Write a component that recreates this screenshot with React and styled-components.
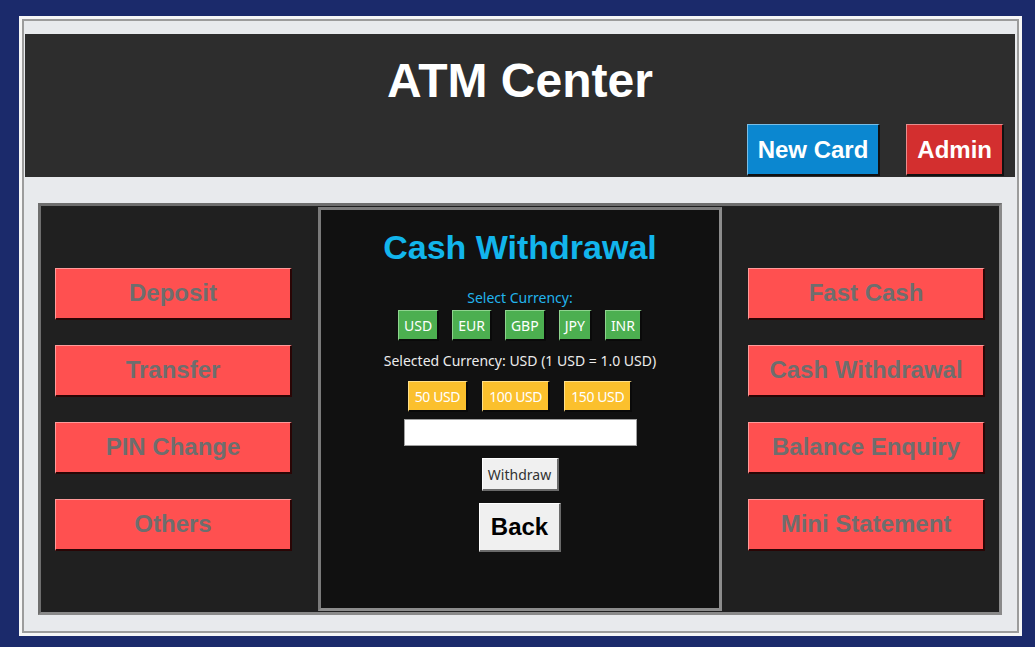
import React, { useState } from 'react';
import styled, { createGlobalStyle } from 'styled-components';

const GlobalStyle = createGlobalStyle`
  html, body {
    margin: 0;
    padding: 0;
    background: #1b2a6b;
  }
  body {
    font-family: 'Liberation Sans', Arial, sans-serif;
  }
`;

const currencies = ['USD', 'EUR', 'GBP', 'JPY', 'INR'];
const amounts = [50, 100, 150];
const leftMenu = ['Deposit', 'Transfer', 'PIN Change', 'Others'];
const rightMenu = ['Fast Cash', 'Cash Withdrawal', 'Balance Enquiry', 'Mini Statement'];

export default function App() {
  const [currency, setCurrency] = useState('USD');
  const [amount, setAmount] = useState('');

  return (
    <>
      <GlobalStyle />
      <Window>
        <Header>
          <Title>ATM Center</Title>
          <HeaderActions>
            <HeaderButton $bg="#0b87d0">New Card</HeaderButton>
            <HeaderButton $bg="#d32f2f">Admin</HeaderButton>
          </HeaderActions>
        </Header>

        <Panel>
          <MenuColumn $side="left">
            {leftMenu.map((label) => (
              <MenuButton key={label}>{label}</MenuButton>
            ))}
          </MenuColumn>

          <Screen>
            <ScreenTitle>Cash Withdrawal</ScreenTitle>
            <Label>Select Currency:</Label>
            <ChipRow $gap={13} $top={3}>
              {currencies.map((c) => (
                <Chip key={c} $color="green" onClick={() => setCurrency(c)}>
                  {c}
                </Chip>
              ))}
            </ChipRow>
            <Info>Selected Currency: {currency} (1 {currency} = 1.0 USD)</Info>
            <ChipRow $gap={14} $top={11}>
              {amounts.map((a) => (
                <Chip
                  key={a}
                  $color="yellow"
                  onClick={() => setAmount(String(a))}
                >
                  {a} {currency}
                </Chip>
              ))}
            </ChipRow>
            <AmountInput
              value={amount}
              onChange={(e) => setAmount(e.target.value)}
            />
            <WithdrawButton>Withdraw</WithdrawButton>
            <BackButton>Back</BackButton>
          </Screen>

          <MenuColumn $side="right">
            {rightMenu.map((label) => (
              <MenuButton key={label}>{label}</MenuButton>
            ))}
          </MenuColumn>
        </Panel>
      </Window>
    </>
  );
}

const Window = styled.div`
  box-sizing: border-box;
  margin: 16px 0 0 19px;
  width: 1003px;
  height: 620px;
  border: 3px solid #f6f6f6;
  box-shadow: inset 0 0 0 2px #9c9c9c;
  background: #e8eaed;
  padding: 15px 4px 18px 3px;
  display: flex;
  flex-direction: column;
`;

const Header = styled.header`
  box-sizing: border-box;
  height: 143px;
  background: #2d2d2d;
  padding-top: 19px;
  display: flex;
  flex-direction: column;
`;

const Title = styled.h1`
  margin: 0;
  text-align: center;
  color: #ffffff;
  font-size: 48px;
  font-weight: bold;
  line-height: 55px;
`;

const HeaderActions = styled.div`
  display: flex;
  justify-content: flex-end;
  gap: 26px;
  padding-right: 11px;
  margin-top: 16px;
`;

const HeaderButton = styled.button`
  box-sizing: border-box;
  height: 52px;
  padding: 0 10px;
  background: ${(p) => p.$bg};
  color: #ffffff;
  font-family: 'Liberation Sans', Arial, sans-serif;
  font-size: 24px;
  font-weight: bold;
  border-style: solid;
  border-color: rgba(255, 255, 255, 0.45) #111 #111 rgba(255, 255, 255, 0.45);
  border-width: 1px 2px 2px 1px;
`;

const Panel = styled.main`
  box-sizing: border-box;
  margin: 26px 13px 0;
  flex: 1;
  border: 3px solid;
  border-color: #6e6e6e #8a8a8a #8a8a8a #6e6e6e;
  background: #202020;
  display: grid;
  grid-template-columns: 1fr 404px 1fr;
  padding: 1px 0;
`;

const MenuColumn = styled.nav`
  display: flex;
  flex-direction: column;
  justify-content: center;
  gap: 25px;
  padding-left: ${(p) => (p.$side === 'left' ? '14px' : '26px')};
`;

const MenuButton = styled.button`
  box-sizing: border-box;
  width: 237px;
  height: 52px;
  background: #ff5050;
  color: #6e6e6e;
  font-family: 'Liberation Sans', Arial, sans-serif;
  font-size: 24px;
  font-weight: bold;
  border-style: solid;
  border-width: 1px 2px 2px 1px;
  border-color: #ff9a9a #2a0505 #2a0505 #ff9a9a;
  padding: 0;
`;

const Screen = styled.section`
  box-sizing: border-box;
  border: 3px solid;
  border-color: #7a7a7a #8c8c8c #8c8c8c #7a7a7a;
  background: #111111;
  display: flex;
  flex-direction: column;
  align-items: center;
  padding-top: 18px;
`;

const ScreenTitle = styled.h2`
  margin: 0;
  color: #12b5ec;
  font-size: 34px;
  font-weight: bold;
  line-height: 39px;
`;

const Label = styled.div`
  margin-top: 21px;
  color: #22b4ec;
  font-family: 'Noto Sans', sans-serif;
  font-size: 14px;
  line-height: 19px;
`;

const Info = styled.div`
  margin-top: 10px;
  color: #ececec;
  font-family: 'Noto Sans', sans-serif;
  font-size: 14px;
  line-height: 19px;
`;

const ChipRow = styled.div`
  display: flex;
  gap: ${(p) => p.$gap}px;
  margin-top: ${(p) => p.$top}px;
`;

const chipColors = {
  green: { bg: '#4caf50', light: '#8fd48f', pad: 5 },
  yellow: { bg: '#fbc02d', light: '#ffe08a', pad: 6 }
};

const Chip = styled.button`
  box-sizing: border-box;
  height: 31px;
  padding: 0 ${(p) => chipColors[p.$color].pad}px;
  background: ${(p) => chipColors[p.$color].bg};
  color: #ffffff;
  font-family: 'Noto Sans', sans-serif;
  font-size: 14px;
  letter-spacing: ${(p) => (p.$color === 'yellow' ? '-0.4px' : '0')};
  border-style: solid;
  border-width: 1px 2px 2px 1px;
  border-color: ${(p) => chipColors[p.$color].light} #0a0a0a #0a0a0a
    ${(p) => chipColors[p.$color].light};
`;

const AmountInput = styled.input`
  box-sizing: border-box;
  margin-top: 7px;
  width: 233px;
  height: 27px;
  border: 1px solid #a0a0a0;
  background: #ffffff;
  outline: none;
  padding: 0 4px;
`;

const WithdrawButton = styled.button`
  box-sizing: border-box;
  margin-top: 12px;
  width: 77px;
  height: 33px;
  background: #f0f0f0;
  color: #333333;
  font-family: 'Noto Sans', sans-serif;
  font-size: 14px;
  padding: 0;
  border-style: solid;
  border-width: 1px 2px 2px 1px;
  border-color: #ffffff #6a6a6a #6a6a6a #ffffff;
`;

const BackButton = styled.button`
  box-sizing: border-box;
  margin-top: 12px;
  width: 82px;
  height: 49px;
  background: #f0f0f0;
  color: #000000;
  font-family: 'Liberation Sans', Arial, sans-serif;
  font-size: 24px;
  font-weight: bold;
  padding: 0;
  border-style: solid;
  border-width: 1px 2px 2px 1px;
  border-color: #ffffff #6a6a6a #6a6a6a #ffffff;
`;
